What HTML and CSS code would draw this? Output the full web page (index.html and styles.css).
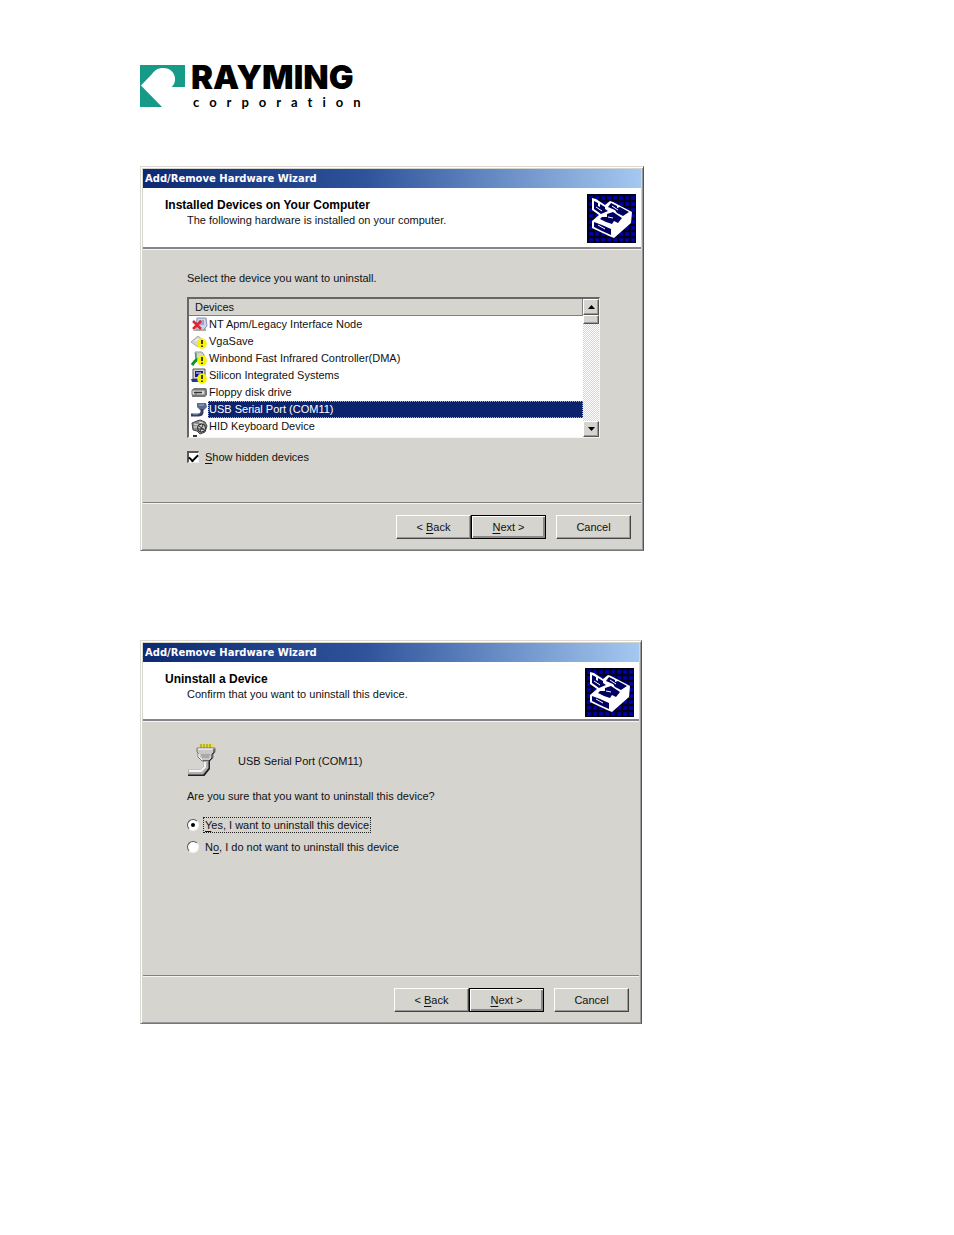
FILE: index.html
```html
<!DOCTYPE html>
<html lang="en">
<head>
<meta charset="utf-8">
<title>Rayming Corporation</title>
<link rel="stylesheet" href="styles.css">
</head>
<body>
<svg class="defs" width="0" height="0" aria-hidden="true">
  <defs>
    <pattern id="grid" width="6" height="6" patternUnits="userSpaceOnUse">
      <rect width="6" height="6" fill="#000090"/>
      <path d="M0 1h6M1 0v6" stroke="#00001c" stroke-width="2"/>
      <path d="M4 3v2M3 4h2" stroke="#0000c8" stroke-width="1"/>
    </pattern>
    <symbol id="hardware" viewBox="0 0 49 49">
      <rect width="49" height="49" fill="url(#grid)"/>
      <path d="M5 4L9 5L18 11L23 7L26 8L45 18L44 29L27 44L22 42L5 34V27L12 21L5 16Z" fill="#fff"/>
      <path d="M7 7L11 9V12L13 13V10L18 13V15L21 17L14 20L7 15Z" fill="#000060"/>
      <path d="M24 9L30 12V14L33 13L42 18L36 22L30 19L28 16L21 13Z" fill="#000060"/>
      <path d="M20 20L26 18L35 24L31 29L27 27L25 30L19 28L13 25L15 23H20Z" fill="#000060"/>
      <path d="M7 28L15 31L24 35V41L15 37L7 33Z" fill="#000060"/>
      <path d="M11 31L18 35M9 13L15 17M25 12L31 16M21 23L26 24" stroke="#fff" stroke-width="1"/>
    </symbol>
    <symbol id="warn" viewBox="0 0 10 11">
      <ellipse cx="5" cy="5.500" rx="4.800" ry="5.300" fill="#f8f400"/>
      <path d="M5 2v4M5 7.500v1.500" stroke="#111" stroke-width="1.600"/>
    </symbol>
  </defs>
</svg>

<main class="page">
  <header class="brand">
    <svg class="brand-mark" viewBox="0 0 45 42" aria-hidden="true">
      <path d="M0 0H45V22H31.500C35 19 35 16 35 13C34 6 29 3 23 3C18 3 15 5 12 9L1 20.500L22 42H0Z" fill="#169b88"/>
    </svg>
    <div class="brand-text">
      <span class="brand-name">RAYMING</span>
      <span class="brand-sub">corporation</span>
    </div>
  </header>

  <section class="dialog dialog-list" aria-labelledby="t1">
    <h2 class="titlebar" id="t1">Add/Remove Hardware Wizard</h2>
    <div class="banner">
      <div class="banner-text">
        <h3>Installed Devices on Your Computer</h3>
        <p>The following hardware is installed on your computer.</p>
      </div>
      <svg class="banner-icon" aria-hidden="true"><use href="#hardware"/></svg>
    </div>
    <div class="body">
      <p>Select the device you want to uninstall.</p>
      <div class="listbox">
        <table class="devices">
          <thead><tr><th scope="col">Devices</th></tr></thead>
          <tbody>
            <tr><td><div class="row">
              <svg viewBox="0 0 17 16" aria-hidden="true"><path d="M6 1H15L16 9L12 13H5Z" fill="#cfd3e4" stroke="#8a8fb0"/><path d="M8 3h5v5H8z" fill="#9aa4d0"/><path d="M2 13h10l3-2v3H3z" fill="#aaa"/><path d="M2 4L10 12M10 4L2 12" stroke="#e02430" stroke-width="2.500"/></svg>
              <span>NT Apm/Legacy Interface Node</span></div></td></tr>
            <tr><td><div class="row">
              <svg viewBox="0 0 17 16" aria-hidden="true"><path d="M0 8L7 2L13 7L7 13Z" fill="#d4d4d4" stroke="#aaa"/><path d="M4 7l3-2 3 2" stroke="#fff" fill="none"/><use href="#warn" x="6" y="4" width="10" height="11"/></svg>
              <span>VgaSave</span></div></td></tr>
            <tr><td><div class="row">
              <svg viewBox="0 0 17 16" aria-hidden="true"><path d="M4 1h7l2 3v5H5z" fill="#d4d4d4" stroke="#999"/><path d="M1 14L4 10L7 8" stroke="#189028" stroke-width="3" fill="none"/><path d="M5 2v9" stroke="#189028" stroke-width="1"/><use href="#warn" x="6" y="4" width="10" height="11"/></svg>
              <span>Winbond Fast Infrared Controller(DMA)</span></div></td></tr>
            <tr><td><div class="row">
              <svg viewBox="0 0 17 16" aria-hidden="true"><path d="M2 1H14V11H2Z" fill="#d5d5d5" stroke="#555"/><path d="M4 3h8v6H4z" fill="#08189a"/><path d="M5 5h5" stroke="#fff"/><path d="M0 11h8v3H1z" fill="#173c9b"/><use href="#warn" x="6" y="5" width="10" height="11"/></svg>
              <span>Silicon Integrated Systems</span></div></td></tr>
            <tr><td><div class="row">
              <svg viewBox="0 0 17 16" aria-hidden="true"><path d="M1 5L3 3H15L16 5V10L14 12H1Z" fill="#777"/><path d="M1 5H14V10H1Z" fill="#d6d6d6" stroke="#777"/><path d="M3 7.500h8" stroke="#333" stroke-width="1.500"/><path d="M4 9h2" stroke="#2a8a2a"/></svg>
              <span>Floppy disk drive</span></div></td></tr>
            <tr class="selected"><td><div class="row">
              <svg viewBox="0 0 17 16" aria-hidden="true"><path d="M6 1L15 1L16 5L13 8H9L6 5Z" fill="#5a6a90"/><path d="M11 7V10Q11 13 7 13H0" fill="none" stroke="#33415f" stroke-width="3"/><path d="M8 3h5M2 12h5" stroke="#a6b4cc"/></svg>
              <span>USB Serial Port (COM11)</span></div></td></tr>
            <tr><td><div class="row">
              <svg viewBox="0 0 17 16" aria-hidden="true"><path d="M1 4L6 2L9 1L14 3L16 7L14 13L9 15L6 12L2 11Z" fill="#8a8a8a" stroke="#444"/><path d="M3 5l4 1M3 8h3M8 3l4 1" stroke="#eee"/><circle cx="10.500" cy="9" r="4" fill="#ccc" stroke="#222"/><path d="M8 7l5 4M12 6l-3 6M7 10h6" stroke="#333"/></svg>
              <span>HID Keyboard Device</span></div></td></tr>
            <tr><td><div class="row row-clipped">
              <svg viewBox="0 0 17 2" aria-hidden="true"><path d="M2 1h4" stroke="#333" stroke-width="2"/></svg></div></td></tr>
          </tbody>
        </table>
        <div class="scrollbar">
          <button type="button" class="scroll-btn" aria-label="Scroll up"><svg viewBox="0 0 7 4"><path d="M0 4L3.500 0L7 4Z"/></svg></button>
          <div class="thumb"></div>
          <button type="button" class="scroll-btn scroll-down" aria-label="Scroll down"><svg viewBox="0 0 7 4"><path d="M0 0H7L3.500 4Z"/></svg></button>
        </div>
      </div>
      <label class="option hidden-option"><input type="checkbox" checked><span><u>S</u>how hidden devices</span></label>
    </div>
    <div class="actions">
      <button type="button" class="btn">&lt; <u>B</u>ack</button>
      <button type="button" class="btn btn-default"><u>N</u>ext &gt;</button>
      <button type="button" class="btn btn-cancel">Cancel</button>
    </div>
  </section>

  <section class="dialog dialog-confirm" aria-labelledby="t2">
    <h2 class="titlebar" id="t2">Add/Remove Hardware Wizard</h2>
    <div class="banner">
      <div class="banner-text">
        <h3>Uninstall a Device</h3>
        <p>Confirm that you want to uninstall this device.</p>
      </div>
      <svg class="banner-icon" aria-hidden="true"><use href="#hardware"/></svg>
    </div>
    <div class="body">
      <div class="device">
        <svg class="device-icon" viewBox="0 0 32 34" aria-hidden="true">
          <path d="M12 0H27V5H12Z" fill="#e8e040"/>
          <path d="M14 0v5M17 0v5M20 0v5M23 0v5" stroke="#8b8430"/>
          <path d="M10 4H28V8L26 9V14L23 17H15L11 13V9L10 8Z" fill="#c8c8c8" stroke="#777"/>
          <path d="M11 5h15M12 10v3l3 3" stroke="#fff" fill="none"/>
          <path d="M27 5v4l-2 1v4l-3 3h-6" stroke="#222" fill="none"/>
          <path d="M14 11h9M15 13h7" stroke="#888"/>
          <path d="M20 17V24L16 29H1" fill="none" stroke="#222" stroke-width="6"/>
          <path d="M19 17V23L15 28H1" fill="none" stroke="#b0b0b0" stroke-width="5"/>
          <path d="M18 18V23L14 27H2" fill="none" stroke="#f4f4f4" stroke-width="2"/>
        </svg>
        <span>USB Serial Port (COM11)</span>
      </div>
      <fieldset class="choices">
        <legend>Are you sure that you want to uninstall this device?</legend>
        <label class="option"><input type="radio" name="confirm" checked><span class="focused"><u>Y</u>es, I want to uninstall this device</span></label>
        <label class="option"><input type="radio" name="confirm"><span>N<u>o</u>, I do not want to uninstall this device</span></label>
      </fieldset>
    </div>
    <div class="actions">
      <button type="button" class="btn">&lt; <u>B</u>ack</button>
      <button type="button" class="btn btn-default"><u>N</u>ext &gt;</button>
      <button type="button" class="btn btn-cancel">Cancel</button>
    </div>
  </section>
</main>
</body>
</html>
```

FILE: styles.css
```css
* { box-sizing: border-box; }

body {
  margin: 0;
  background: #fff;
  color: #111;
  font: 11px/14px "Liberation Sans", Arial, sans-serif;
}

h2, h3, p { margin: 0; }
u { text-underline-offset: 2px; }
.defs { position: absolute; }

.page { padding: 60px 140px 64px; }

/* Brand */
.brand { display: flex; gap: 6px; }
.brand-mark { width: 45px; height: 42px; margin-top: 5px; flex: none; }
.brand-text { display: flex; flex-direction: column; color: #000; }
.brand-name { font: 900 33px/34px Inter, sans-serif; }
.brand-sub { padding-left: 2px; font: 700 13px/16px Lato, sans-serif; letter-spacing: 10px; }

/* Wizard window */
.dialog {
  display: flex;
  flex-direction: column;
  max-width: 504px;
  background: #d6d4ce;
  border: 1px solid #dcd8d4;
  border-right-color: #555;
  border-bottom-color: #777;
  box-shadow: inset 1px 1px #fff, inset -1px -1px #999;
  padding: 2px;
}
.dialog-list { margin-top: 56px; }
.dialog-confirm { margin-top: 89px; max-width: 502px; }

.titlebar {
  padding-left: 2px;
  background: linear-gradient(90deg, #0c2a72, #2f549c 45%, #a4c8f0);
  color: #fff;
  font: 700 10px/19px "DejaVu Sans", Verdana, sans-serif;
}

.banner {
  display: flex;
  justify-content: space-between;
  align-items: flex-start;
  background: #fff;
  border-bottom: 2px solid #85858a;
  padding: 6px 5px 4px 22px;
  box-shadow: 0 1px #f4f4f2;
}
.dialog-confirm .banner { padding-bottom: 2px; }
.banner-text h3 {
  padding-top: 4px;
  color: #000;
  font: 700 12px/15px "Liberation Sans", Arial, sans-serif;
}
.banner-text p { padding-left: 22px; }
.banner-icon { width: 49px; height: 49px; flex: none; }

.body { padding: 22px 41px 0 44px; }
.dialog-list .body { padding-bottom: 37px; }

/* Device list */
.listbox {
  display: flex;
  margin-top: 12px;
  background: #fff;
  border: 1px solid #f4f4f2;
  border-top: 2px solid #66666a;
  border-left: 2px solid #66666a;
}
.devices { flex: 1; border-collapse: collapse; }
.devices th {
  padding: 0 6px;
  background: #d6d4ce;
  border-bottom: 1px solid #808080;
  border-right: 1px solid #808080;
  font-weight: 400;
  text-align: left;
  line-height: 16px;
}
.devices td { padding: 0; }
.row { display: flex; align-items: center; padding-left: 2px; }
.row svg { width: 17px; height: 16px; flex: none; }
.row.row-clipped svg { height: 2px; }
.row span {
  flex: 1;
  line-height: 15px;
  border: 1px solid transparent;
}
.selected span { background: #0b226c; color: #fff; border: 1px dotted #c4b85c; }

.scrollbar {
  display: flex;
  flex-direction: column;
  width: 16px;
  background: repeating-conic-gradient(#d6d4ce 0 25%, #fff 0 50%) 0 0 / 2px 2px;
}
.scroll-btn, .thumb {
  background: #d6d4ce;
  border: 1px solid #fff;
  border-right-color: #555;
  border-bottom-color: #555;
  box-shadow: inset -1px -1px #999;
}
.scroll-btn { display: grid; place-items: center; height: 16px; padding: 0; }
.scroll-btn svg { width: 7px; height: 4px; }
.thumb { height: 9px; }
.scroll-down { margin-top: auto; }

/* Options */
.option { display: flex; align-items: center; gap: 4px; }
.option span { padding: 0 1px; border: 1px dotted transparent; }
.option .focused { border-color: #222; }
.hidden-option { margin-top: 11px; }

input { appearance: none; width: 12px; height: 12px; margin: 0; flex: none; background: #fff; }
input[type="checkbox"] {
  display: grid;
  place-items: center;
  border: 2px solid #55555a;
  border-right: 1px solid #eee;
  border-bottom: 1px solid #eee;
}
input[type="checkbox"]:checked::before {
  content: "";
  width: 7px;
  height: 4px;
  border: solid #000;
  border-width: 0 0 2px 2px;
  rotate: -45deg;
  margin-bottom: 2px;
}
input[type="radio"] {
  display: grid;
  place-items: center;
  border: 1px solid;
  border-color: #555 #f4f4f2 #f4f4f2 #555;
  border-radius: 50%;
}
input[type="radio"]:checked::before {
  content: "";
  width: 4px;
  height: 4px;
  border-radius: 50%;
  background: #000;
}

/* Confirm step */
.dialog-confirm .body { padding-top: 23px; }
.device { display: flex; align-items: center; gap: 19px; }
.device-icon { width: 32px; height: 34px; flex: none; }
.choices { margin: 11px 0 120px; padding: 0; border: 0; }
.choices legend { padding: 0; }
.choices .option { margin-top: 6px; }
.choices legend + .option { margin-top: 14px; }

/* Button bar */
.actions {
  display: flex;
  justify-content: flex-end;
  padding: 12px 10px 9px;
  border-top: 1px solid #808080;
  box-shadow: inset 0 1px #f4f4f2;
}
.btn {
  width: 75px;
  height: 24px;
  padding: 0;
  background: #d6d4ce;
  border: 1px solid #fff;
  border-right-color: #444;
  border-bottom-color: #444;
  box-shadow: inset -1px -1px #999;
  color: #111;
  font: inherit;
}
.btn-default { border-color: #000; box-shadow: inset 1px 1px #fff, inset -2px -2px #888; }
.btn-cancel { margin-left: 10px; }
```
